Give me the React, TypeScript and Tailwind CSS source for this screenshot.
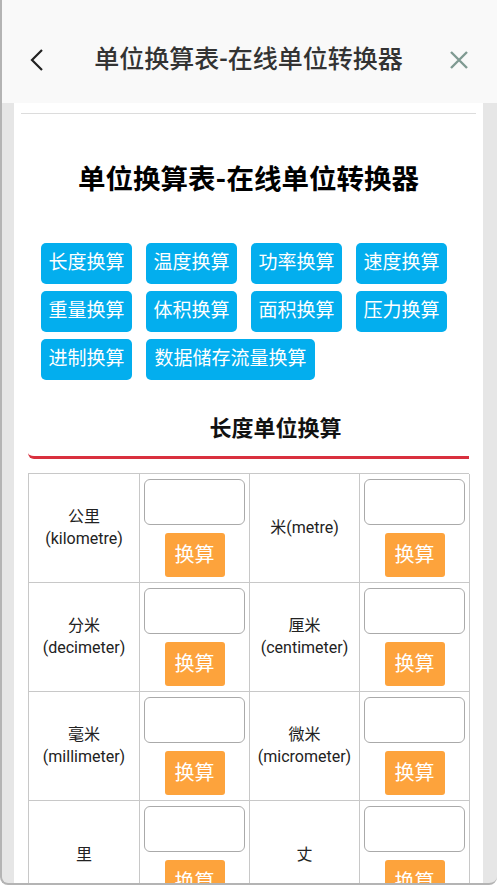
import React from "react";

const categories = [
  { name: "长度换算", w: "w-[91px]" },
  { name: "温度换算", w: "w-[91px]" },
  { name: "功率换算", w: "w-[91px]" },
  { name: "速度换算", w: "w-[91px]" },
  { name: "重量换算", w: "w-[91px]" },
  { name: "体积换算", w: "w-[91px]" },
  { name: "面积换算", w: "w-[91px]" },
  { name: "压力换算", w: "w-[91px]" },
  { name: "进制换算", w: "w-[91px]" },
  { name: "数据储存流量换算", w: "w-[169px]" },
];

const units: [string, string][] = [
  ["公里", "(kilometre)"],
  ["米(metre)", ""],
  ["分米", "(decimeter)"],
  ["厘米", "(centimeter)"],
  ["毫米", "(millimeter)"],
  ["微米", "(micrometer)"],
  ["里", ""],
  ["丈", ""],
];

function UnitCell({ zh, en }: { zh: string; en: string }) {
  return (
    <>
      <div className="flex flex-col items-center justify-center text-center text-[16px] leading-[22px] text-[#222] border-r border-b border-[#c8c8c8]">
        <span>{zh}</span>
        {en && <span>{en}</span>}
      </div>
      <div className="flex flex-col items-center pt-[5px] border-r border-b border-[#c8c8c8]">
        <input
          type="text"
          className="w-[101px] h-[46px] border border-[#aaa] rounded-[6px] bg-white outline-none"
        />
        <button className="mt-[8px] w-[60px] h-[44px] rounded-[3px] bg-[#fda33c] text-white text-[20px]">
          换算
        </button>
      </div>
    </>
  );
}

export default function App() {
  return (
    <div
      className="h-[885px] w-[497px] overflow-hidden bg-[#e6e6e6] border-l-2 border-b-2 border-[#b4b4b4] rounded-b-[8px] flex flex-col"
      style={{ fontFamily: "Roboto, 'Noto Sans CJK SC', sans-serif" }}
    >
      {/* top bar */}
      <div className="h-[103px] shrink-0 bg-[#f9f9f9] flex items-center justify-between pt-[17px] pl-[27px] pr-[28px]">
        <svg width="16" height="24" viewBox="0 0 16 24" fill="none">
          <path d="M13 2 L3 12 L13 22" stroke="#222" strokeWidth="2.2" />
        </svg>
        <h2 className="text-[25px] text-[#333] font-medium pl-[3px]">单位换算表-在线单位转换器</h2>
        <svg width="20" height="20" viewBox="0 0 20 20" fill="none">
          <path d="M2 2 L18 18 M18 2 L2 18" stroke="#7f9a92" strokeWidth="2.4" />
        </svg>
      </div>

      {/* card */}
      <div className="ml-[12px] mr-[14px] flex-1 bg-white">
        <div className="mx-[7px] mt-[10px] h-px bg-[#dcdcdc]" />
        <h1 className="mt-[48px] text-center text-[27.5px] leading-[36px] font-bold text-black">
          单位换算表-在线单位转换器
        </h1>

        <div className="mt-[45px] pl-[27px] pr-[20px] flex flex-wrap gap-x-[14px] gap-y-[7px]">
          {categories.map((c) => (
            <div
              key={c.name}
              className={`${c.w} h-[41px] rounded-[5px] bg-[#03aeee] text-white text-[19px] flex items-center justify-center`}
            >
              {c.name}
            </div>
          ))}
        </div>

        <div className="mt-[34px] mx-[14px] border-b-[3px] border-[#d9303e] rounded-bl-[6px] pb-[12px] pl-[54px] text-center">
          <h3 className="text-[22px] leading-[30px] font-bold text-[#111]">长度单位换算</h3>
        </div>

        <div className="mt-[14px] ml-[14px] w-[441px] grid grid-cols-[111px_110px_110px_110px] auto-rows-[109px] border-t border-l border-[#c8c8c8]">
          {units.map(([zh, en]) => (
            <UnitCell key={zh} zh={zh} en={en} />
          ))}
        </div>
      </div>
    </div>
  );
}
